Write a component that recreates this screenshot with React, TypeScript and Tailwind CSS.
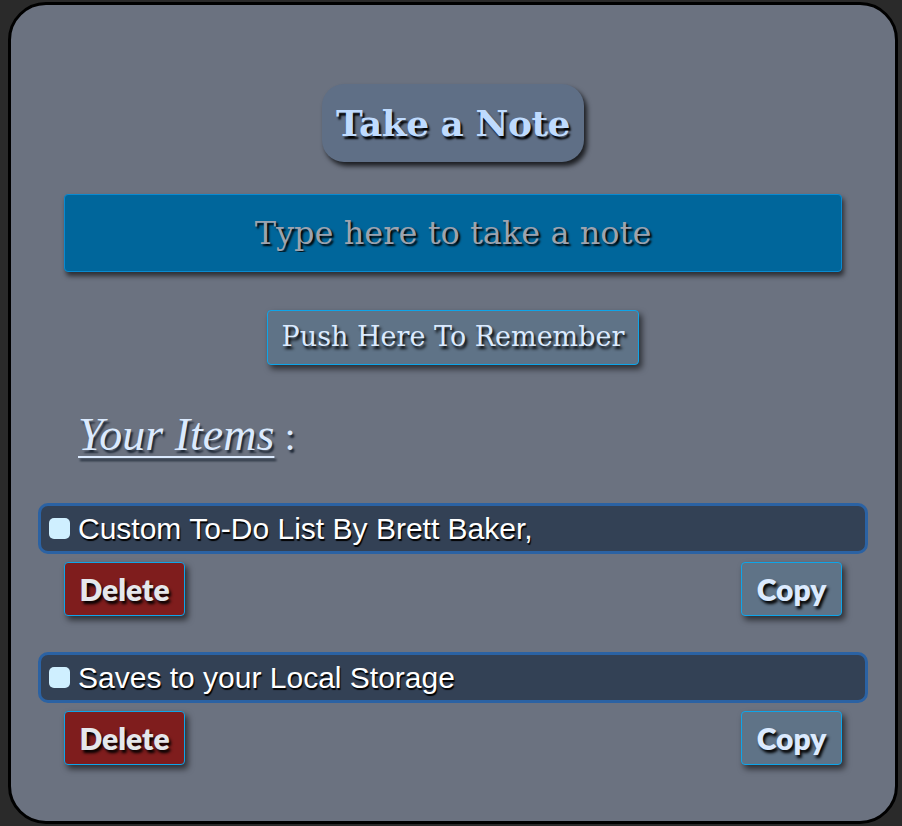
import React from "react";

const items = ["Custom To-Do List By Brett Baker,", "Saves to your Local Storage"];

export default function App() {
  return (
    <div className="w-[902px] h-[826px] bg-[#2a2a2a] pt-[2px] pl-[8px] overflow-hidden">
      <div className="w-[890px] h-[822px] border-[3px] border-black rounded-[38px] bg-[#6b7280] flex flex-col items-center pt-[79px]">
        <div className="h-[78px] px-[14px] flex items-center rounded-[22px] bg-[#5f6f86] shadow-[3px_4px_5px_rgba(0,0,0,0.75)]">
          <h1 className="font-['DejaVu_Serif',serif] font-bold text-[36px] text-[#bfdbfe] [text-shadow:2px_3px_2px_#000] tracking-[-0.5px]">
            Take a Note
          </h1>
        </div>

        <input
          className="mt-[32px] w-[778px] h-[78px] bg-[#00669b] border border-[#0a8ad0] rounded-[4px] text-center font-['DejaVu_Serif',serif] text-[32px] text-[#9ca3af] placeholder:text-[#9ca3af] [text-shadow:2px_2px_2px_#000] shadow-[2px_4px_5px_rgba(0,0,0,0.6)] outline-none"
          placeholder="Type here to take a note"
        />

        <button className="mt-[38px] h-[55px] px-[14px] bg-[#5f7387] border border-[#0ea5e9] rounded-[4px] font-['DejaVu_Serif',serif] text-[27px] text-[#dbeafe] [text-shadow:2px_3px_3px_#000] shadow-[3px_4px_6px_rgba(0,0,0,0.6)]">
          Push Here To Remember
        </button>

        <div className="self-start ml-[67px] mt-[42px] font-['Liberation_Serif',serif] text-[46px] leading-[56px] text-[#dbeafe] [text-shadow:2px_3px_2px_#1f2937]">
          <span className="italic underline decoration-[2px] underline-offset-[6px]">Your Items</span>
          <span className="text-[40px]"> :</span>
        </div>

        <div className="mt-[38px] w-[830px] flex flex-col gap-[36px]">
          {items.map((t) => (
            <div key={t} className="flex flex-col">
              <div className="h-[51px] flex items-center gap-[8px] px-[8px] bg-[#334155] border-[3px] border-[#2b62a3] rounded-[10px]">
                <div className="w-[21px] h-[21px] rounded-[5px] bg-[#cfefff]" />
                <span className="font-['Liberation_Sans',sans-serif] text-[30px] text-white [text-shadow:1px_2px_1px_#000]">
                  {t}
                </span>
              </div>
              <div className="mt-[8px] flex justify-between px-[26px]">
                <button className="w-[121px] h-[54px] bg-[#7f1d1d] border border-[#0ea5e9] rounded-[4px] font-['Lato',sans-serif] font-extrabold text-[30px] text-[#e5e7eb] [text-shadow:2px_3px_3px_#000] shadow-[3px_4px_6px_rgba(0,0,0,0.6)]">
                  Delete
                </button>
                <button className="w-[101px] h-[54px] bg-[#5f7387] border border-[#0ea5e9] rounded-[4px] font-['Lato',sans-serif] font-extrabold text-[30px] text-[#dbeafe] [text-shadow:2px_3px_3px_#000] shadow-[3px_4px_6px_rgba(0,0,0,0.6)]">
                  Copy
                </button>
              </div>
            </div>
          ))}
        </div>
      </div>
    </div>
  );
}
